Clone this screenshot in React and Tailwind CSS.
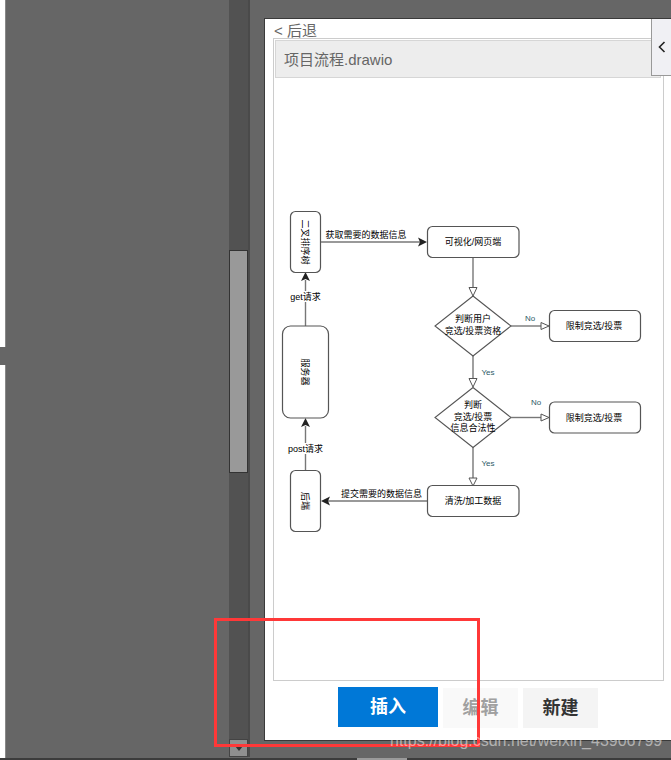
const cjk = "font-['Liberation_Sans','Noto_Sans_CJK_SC',sans-serif]";

function FlowBox({ x, y, w, h, r = 5, children }) {
  return (
    <g>
      <rect x={x} y={y} width={w} height={h} rx={r} fill="white" stroke="#555" strokeWidth="1.2" />
      {children}
    </g>
  );
}

function Label({ x, y, children, size = 9, fill = "#000", anchor = "middle", rotate }) {
  return (
    <text
      x={x}
      y={y + 1}
      fontSize={size}
      fill={fill}
      textAnchor={anchor}
      dominantBaseline="middle"
      transform={rotate ? `rotate(90 ${x} ${y})` : undefined}
    >
      {children}
    </text>
  );
}

function Line({ d }) {
  return <path d={d} fill="none" stroke="#777" strokeWidth="1.4" />;
}

function Flowchart() {
  return (
    <svg viewBox="274 78 389 602" className="block w-[389px] h-[602px]">
      {/* left column */}
      <Line d="M305.5 326V280" />
      <Line d="M305.5 470V426" />
      <rect x="288" y="291" width="34" height="11" fill="white" />
      <rect x="287" y="443" width="37" height="11" fill="white" />
      <path d="M305.5 272L310 281L305.5 279L301 281Z" fill="#222" />
      <path d="M305.5 418L310 427L305.5 425L301 427Z" fill="#222" />
      <Label x={305.5} y={296.5}>get请求</Label>
      <Label x={305.5} y={448.5}>post请求</Label>

      <FlowBox x={290.5} y={211.5} w={30} h={61}>
        <Label x={305.5} y={242} rotate>二叉排序树</Label>
      </FlowBox>
      <FlowBox x={282.5} y={326} w={46} h={92} r={8}>
        <Label x={305.5} y={372} rotate>服务器</Label>
      </FlowBox>
      <FlowBox x={290.5} y={470.5} w={30} h={61}>
        <Label x={305.5} y={501} rotate>后端</Label>
      </FlowBox>

      {/* horizontal links */}
      <Line d="M321 242H422" />
      <path d="M427 242L418 237.5L420 242L418 246.5Z" fill="#222" />
      <Label x={366} y={235}>获取需要的数据信息</Label>
      <Line d="M427 501H328" />
      <path d="M321 501L330 496.5L328 501L330 505.5Z" fill="#222" />
      <Label x={381.5} y={494}>提交需要的数据信息</Label>

      {/* right column */}
      <Line d="M473 257V288" />
      <Line d="M473 356V379" />
      <Line d="M473 447V478" />
      <path d="M469 287.5H477L473 296Z" fill="white" stroke="#555" />
      <path d="M469 378.5H477L473 387Z" fill="white" stroke="#555" />
      <path d="M469 478H477L473 486Z" fill="white" stroke="#555" />

      <FlowBox x={427.5} y={226.5} w={91.5} h={31}>
        <Label x={473} y={242}>可视化/网页端</Label>
      </FlowBox>
      <FlowBox x={427.5} y={485.5} w={91.5} h={31}>
        <Label x={473} y={501}>清洗/加工数据</Label>
      </FlowBox>

      <path d="M473 296L511 326L473 356L435 326Z" fill="white" stroke="#555" strokeWidth="1.1" />
      <Label x={473} y={319}>判断用户</Label>
      <Label x={473} y={331}>竞选/投票资格</Label>
      <path d="M473 387.5L511 417.5L473 447.5L435 417.5Z" fill="white" stroke="#555" strokeWidth="1.1" />
      <Label x={473} y={405}>判断</Label>
      <Label x={473} y={416.5}>竞选/投票</Label>
      <Label x={473} y={428}>信息合法性</Label>

      <Line d="M511 326H542" />
      <Line d="M511 417.5H542" />
      <path d="M541 322.5V329.5L549 326Z" fill="white" stroke="#555" />
      <path d="M541 414V421L549 417.5Z" fill="white" stroke="#555" />
      <FlowBox x={549.5} y={310.5} w={91} h={31}>
        <Label x={594} y={326}>限制竞选/投票</Label>
      </FlowBox>
      <FlowBox x={549.5} y={402} w={91} h={31}>
        <Label x={594} y={417.5}>限制竞选/投票</Label>
      </FlowBox>

      <Label x={530} y={318} size={8} fill="#2c5a66">No</Label>
      <Label x={536} y={402} size={8} fill="#2c5a66">No</Label>
      <Label x={488} y={372} size={8} fill="#2c5a66">Yes</Label>
      <Label x={488} y={463} size={8} fill="#2c5a66">Yes</Label>
    </svg>
  );
}

function Panel() {
  return (
    <div className="relative w-full h-[723px] bg-white border border-[#3a3a3a] border-r-0 pl-2 overflow-hidden">
      <div className="h-[19px] ml-px text-[15px] leading-[24px] text-[#666] overflow-hidden">&lt; 后退</div>
      <div className="w-[391px] h-[643px] border border-[#ccc]">
        <div className="h-[38px] mt-px ml-px mr-[2px] bg-[#ededed] border border-[#d6d6d6] pl-2 text-[15px] leading-[38px] text-[#666]">
          项目流程.drawio
        </div>
        <Flowchart />
      </div>
      <div className="flex mt-[6px] ml-[65px]">
        <button className="w-[100px] h-10 bg-[#0078d7] text-white text-lg font-bold">插入</button>
        <button className="w-[75px] h-10 mt-px ml-[5px] bg-[#f9f9f9] text-[#a0a0a0] text-lg font-bold">编辑</button>
        <button className="w-[75px] h-10 mt-px ml-[5px] bg-[#f4f4f4] text-[#333] text-lg font-bold">新建</button>
      </div>
      {/* collapse tab */}
      <div className="absolute right-0 top-0 w-5 h-[57px] bg-[#f0f0f4] border-l border-b border-[#999] flex items-center justify-center">
        <svg width="8" height="12" viewBox="0 0 8 12">
          <path d="M6.5 1L1.5 6L6.5 11" fill="none" stroke="#222" strokeWidth="1.6" />
        </svg>
      </div>
    </div>
  );
}

export default function App() {
  return (
    <div className={`relative w-[671px] h-[760px] overflow-hidden flex bg-[#666] ${cjk}`}>
      {/* page behind the overlay */}
      <div className="w-[6px] h-full bg-white border-r border-[#888] pt-[347px]">
        <div className="h-[18px] w-[6px] bg-[#666]" />
      </div>
      <div className="w-[223px] h-full" />

      {/* scrollbar */}
      <div className="w-[19px] h-[757px] bg-[#525252] flex flex-col pt-[250px]">
        <div className="h-[223px] bg-[#999] border border-[#333]" />
        <div className="flex-1" />
        <div className="h-[18px] bg-[#8f8f8f] border border-[#444] flex justify-center items-center">
          <svg width="8" height="5" viewBox="0 0 8 5">
            <path d="M0 0H8L4 5Z" fill="#333" />
          </svg>
        </div>
      </div>
      <div className="w-[2px] h-[757px] bg-[#4a4a4a]" />
      <div className="w-[14px] h-full" />

      <div className="flex-1 pt-[18px]">
        <Panel />
      </div>

      {/* bottom bar */}
      <div className="absolute left-0 right-0 bottom-0 h-[2px] bg-[#3c3c3c]">
        <div className="ml-[357px] w-[50px] h-full bg-[#9a9a9a]" />
      </div>

      {/* annotation drawn over the screenshot */}
      <div className="absolute left-[214px] top-[618px] w-[266px] h-[129px] border-[3px] border-[#ff3838]" />
      <div className="absolute left-[390px] top-[729px] text-base leading-6 text-white/50 whitespace-nowrap">
        https://blog.csdn.net/weixin_43906799
      </div>
    </div>
  );
}
